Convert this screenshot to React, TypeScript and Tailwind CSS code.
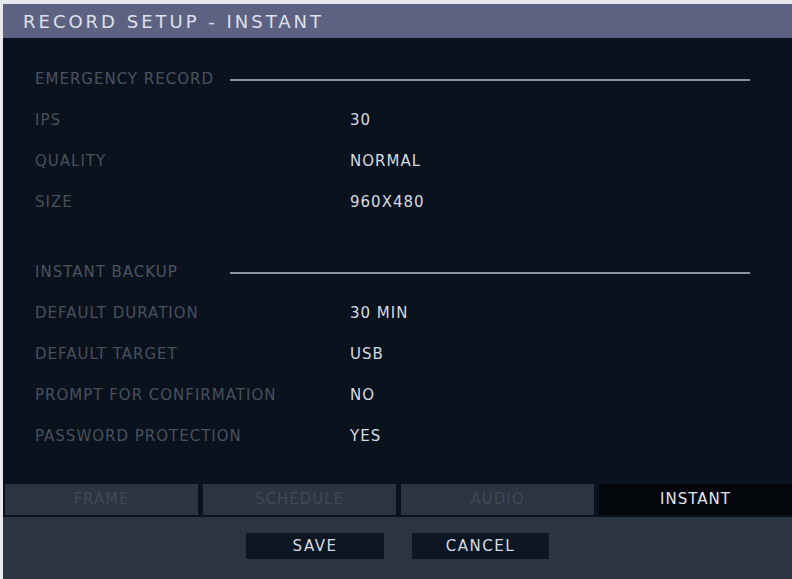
import React from 'react';

type Row = { label: string; value: string };

const EMERGENCY: Row[] = [
  { label: 'IPS', value: '30' },
  { label: 'QUALITY', value: 'NORMAL' },
  { label: 'SIZE', value: '960X480' },
];

const BACKUP: Row[] = [
  { label: 'DEFAULT DURATION', value: '30 MIN' },
  { label: 'DEFAULT TARGET', value: 'USB' },
  { label: 'PROMPT FOR CONFIRMATION', value: 'NO' },
  { label: 'PASSWORD PROTECTION', value: 'YES' },
];

const TABS = ['FRAME', 'SCHEDULE', 'AUDIO', 'INSTANT'];

const Section: React.FC<{ title: string; rows: Row[] }> = ({ title, rows }) => (
  <div>
    <div className="flex items-center h-[41px]">
      <span className="w-[195px] shrink-0 text-[#4a5260]">{title}</span>
      <div className="flex-1 h-[2px] bg-[#8893a3] mr-[42px]" />
    </div>
    {rows.map(r => (
      <div key={r.label} className="flex items-center h-[41px]">
        <span className="w-[315px] shrink-0 text-[#48505c]">{r.label}</span>
        <span className="text-[#d6dae2]">{r.value}</span>
      </div>
    ))}
  </div>
);

const App: React.FC = () => {
  return (
    <div
      className="w-[792px] h-[579px] flex flex-col bg-[#e9eaee] pt-[4px] pl-[3px] overflow-hidden"
      style={{ fontFamily: '"DejaVu Sans", "Liberation Sans", sans-serif' }}
    >
      <div className="flex-1 flex flex-col bg-[#0a121e]">
        <div className="h-[34px] shrink-0 bg-[#5d6282] flex items-center pl-[20px] text-[18px] text-[#dde0ea] tracking-[3px]">
          RECORD SETUP - INSTANT
        </div>

        <div className="flex-1 pl-[32px] pt-[21px] text-[15px] tracking-[1px]">
          <Section title="EMERGENCY RECORD" rows={EMERGENCY} />
          <div className="h-[29px]" />
          <Section title="INSTANT BACKUP" rows={BACKUP} />
        </div>

        <div className="flex gap-[5px] pl-[2px] h-[31px] shrink-0 mb-[2px] text-[15px] tracking-[1px]">
          {TABS.map(t => (
            <div
              key={t}
              className={
                t === 'INSTANT'
                  ? 'flex-1 flex items-center justify-center bg-[#03060a] text-[#e2e5ec]'
                  : 'flex-1 flex items-center justify-center bg-[#2a3540] text-[#3f4956]'
              }
            >
              {t}
            </div>
          ))}
        </div>

        <div className="h-[62px] shrink-0 bg-[#2b3541] flex justify-center items-start pt-[16px] gap-[28px] text-[15px] tracking-[1.5px]">
          <button className="w-[138px] h-[26px] bg-[#0d1724] text-[#d6dae2]">SAVE</button>
          <button className="w-[137px] h-[26px] bg-[#0d1724] text-[#d6dae2]">CANCEL</button>
        </div>
      </div>
    </div>
  );
};

export default App;
